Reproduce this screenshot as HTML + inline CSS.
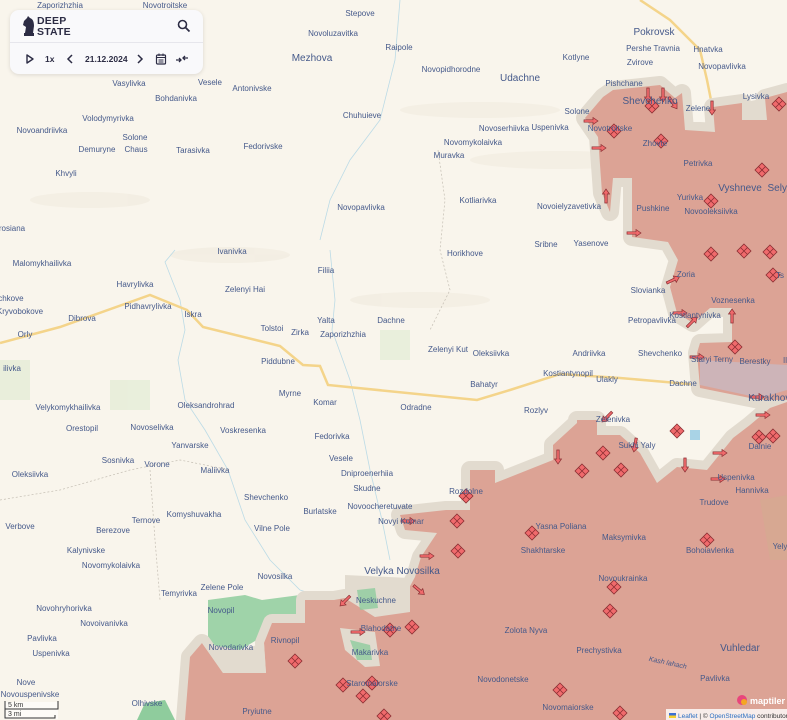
<!DOCTYPE html>
<html><head><meta charset="utf-8"><style>
html,body{margin:0;padding:0;width:787px;height:720px;overflow:hidden;background:#f9f5ec;font-family:"Liberation Sans",sans-serif}
svg{position:absolute;left:0;top:0}
.l text{font-size:8px;fill:#45598a;text-anchor:middle;font-family:"Liberation Sans",sans-serif}
.l text.b{font-size:10px}
.panel{position:absolute;left:10px;top:10px;width:193px;height:64px;background:#f9f9fb;border-radius:9px;box-shadow:0 1px 4px rgba(0,0,0,.12)}
.panel .logo{position:absolute;left:27px;top:6px;font-weight:bold;font-size:10.5px;line-height:11px;color:#2c2c44;letter-spacing:.2px}
.panel .div{position:absolute;left:0;right:0;top:32px;height:1px;background:#e6e6ec}
.panel .row{position:absolute;top:42px;left:0;width:193px;font-size:8.5px;font-weight:bold;color:#2c2c44}
.panel .row span{position:absolute}
</style></head><body>
<svg width="787" height="720" viewBox="0 0 787 720" xmlns="http://www.w3.org/2000/svg">
<defs>
<g id="m"><path d="M0-7L7 0 0 7-7 0Z" fill="#f06a6c" stroke="#8b2f33" stroke-width=".8"/><path d="M-3.5-3.5L3.5 3.5M3.5-3.5L-3.5 3.5" stroke="#8b2f33" stroke-width=".8"/></g>
<g id="a"><path d="M7-1.2H-2V-3.5L-7 0-2 3.5V1.2H7Z" fill="#f06a6c" stroke="#8b2f33" stroke-width=".7"/></g>
</defs>
<!-- terrain hints -->
<g fill="#efe9dc" opacity=".5">
<ellipse cx="230" cy="255" rx="60" ry="8"/><ellipse cx="560" cy="160" rx="90" ry="9"/><ellipse cx="420" cy="300" rx="70" ry="8"/><ellipse cx="90" cy="200" rx="60" ry="8"/><ellipse cx="480" cy="110" rx="80" ry="8"/>
</g>
<g fill="#e3ecd5" opacity=".7">
<rect x="110" y="380" width="40" height="30"/><rect x="0" y="360" width="30" height="40"/><rect x="380" y="330" width="30" height="30"/>
</g>
<!-- rivers -->
<g fill="none" stroke="#bcdbe6" stroke-width=".8">
<path d="M175 250L165 262 172 280 180 300 185 330 178 360 185 400 205 430 228 470 245 520 270 560 300 590 330 600"/>
<path d="M400 0L395 60 380 120 350 160 330 200 320 240"/>
<path d="M330 250L335 300 332 330 350 380 360 420 370 470 382 520 390 560"/>
</g>
<!-- borders -->
<g fill="none" stroke="#c4beb3" stroke-width=".7" stroke-dasharray="2 2">
<path d="M438 150L445 200 440 250 450 290 430 330"/><path d="M0 500L60 490 130 470 180 460 230 470"/><path d="M150 470L155 540 160 600"/>
</g>
<!-- roads -->
<path d="M0 343L60 327 150 295 187 310 203 327 280 346 303 365 320 366 328 385 477 400 510 390 560 374 620 378 700 385 760 396 787 400" fill="none" stroke="#f4d48a" stroke-width="2.5"/>
<path d="M640 0L670 20 700 50 707 80 713 110 723 137 747 153 787 148" fill="none" stroke="#f4d48a" stroke-width="2.5"/>
<!-- green areas -->
<path d="M208 600L245 595 262 600 300 595 305 620 265 635 240 650 208 650Z" fill="#8fcc9d" opacity=".85"/>
<path d="M137 720L145 703 165 700 175 720Z" fill="#8fcc9d"/>
<!-- buffer + red regions -->
<g stroke="#e2dbcf" stroke-width="18" stroke-linejoin="round" fill="#e2dbcf">
<path d="M585 118L603 97 613 90 660 85 675 98 682 93 685 130 715 132 713 107 742 103 742 120 767 120 765 98 787 92 787 400 760 400 700 388 697 353 700 343 732 342 732 308 710 308 693 323 677 313 670 287 678 260 668 242 632 237 632 178 613 178 610 212 602 193 598 137Z"/>
<path d="M185 720L190 657 202 643 223 673 266 673 264 643 272 623 305 623 305 600 334 600 345 598 375 617 408 590 415 577 421 557 437 533 405 530 400 515 446 510 470 510 470 470 495 470 495 483 553 460 553 445 577 423 577 420 597 420 597 435 620 435 640 453 657 483 677 467 707 470 733 438 750 425 770 408 787 402 787 720Z"/>
</g>
<g fill="#dca395">
<path d="M585 118L603 97 613 90 660 85 675 98 682 93 685 130 715 132 713 107 742 103 742 120 767 120 765 98 787 92 787 400 760 400 700 388 697 353 700 343 732 342 732 308 710 308 693 323 677 313 670 287 678 260 668 242 632 237 632 178 613 178 610 212 602 193 598 137Z"/>
<path d="M185 720L190 657 202 643 223 673 266 673 264 643 272 623 305 623 305 600 334 600 345 598 375 617 408 590 415 577 421 557 437 533 405 530 400 515 446 510 470 510 470 470 495 470 495 483 553 460 553 445 577 423 577 420 597 420 597 435 620 435 640 453 657 483 677 467 707 470 733 438 750 425 770 408 787 402 787 720Z"/>
</g>
<!-- gray pockets -->
<path d="M345 575L410 578 410 612 375 617 345 598Z" fill="#e2dbcf"/>
<path d="M340 628L375 632 380 666 365 667 345 650Z" fill="#e2dbcf"/>
<path d="M350 640L370 645 372 660 357 660Z" fill="#8fcc9d" opacity=".8"/>
<path d="M357 590L375 588 378 608 360 610Z" fill="#8fcc9d" opacity=".8"/>
<path d="M202 643L223 673 266 673 264 643 240 650Z" fill="#e2dbcf"/>
<path d="M700 360L787 365 787 390 760 398 700 385Z" fill="#c9b8c0" opacity=".8"/>
<path d="M745 112L765 112 765 98 742 103Z" fill="#e2dbcf"/>
<rect x="690" y="430" width="10" height="10" fill="#a9d3e6"/>
<path d="M760 500L787 495 787 560 770 560Z" fill="#cfae8f" opacity=".4"/>
<!-- markers -->
<g>
<use href="#m" x="652" y="106"/><use href="#m" x="614" y="131"/><use href="#m" x="661" y="141"/><use href="#m" x="762" y="170"/><use href="#m" x="711" y="201"/><use href="#m" x="779" y="104"/><use href="#m" x="711" y="254"/><use href="#m" x="744" y="251"/><use href="#m" x="770" y="252"/><use href="#m" x="773" y="275"/><use href="#m" x="735" y="347"/><use href="#m" x="759" y="437"/><use href="#m" x="773" y="436"/><use href="#m" x="603" y="453"/><use href="#m" x="582" y="471"/><use href="#m" x="621" y="470"/><use href="#m" x="466" y="496"/><use href="#m" x="457" y="521"/><use href="#m" x="458" y="551"/><use href="#m" x="532" y="533"/><use href="#m" x="707" y="540"/><use href="#m" x="614" y="587"/><use href="#m" x="610" y="611"/><use href="#m" x="295" y="661"/><use href="#m" x="390" y="630"/><use href="#m" x="412" y="627"/><use href="#m" x="343" y="685"/><use href="#m" x="363" y="696"/><use href="#m" x="372" y="683"/><use href="#m" x="560" y="690"/><use href="#m" x="620" y="713"/><use href="#m" x="384" y="716"/><use href="#m" x="677" y="431"/>
</g>
<!-- arrows -->
<g>
<use href="#a" transform="translate(648,95) rotate(-90)"/><use href="#a" transform="translate(663,95) rotate(-90)"/><use href="#a" transform="translate(673,103) rotate(-125)"/><use href="#a" transform="translate(712,108) rotate(-90)"/><use href="#a" transform="translate(591,121) rotate(180)"/><use href="#a" transform="translate(599,148) rotate(180)"/><use href="#a" transform="translate(606,196) rotate(90)"/><use href="#a" transform="translate(634,233) rotate(180)"/><use href="#a" transform="translate(673,280) rotate(155)"/><use href="#a" transform="translate(680,313) rotate(180)"/><use href="#a" transform="translate(692,322) rotate(135)"/><use href="#a" transform="translate(732,316) rotate(90)"/><use href="#a" transform="translate(697,357) rotate(180)"/><use href="#a" transform="translate(757,397) rotate(180)"/><use href="#a" transform="translate(763,415) rotate(180)"/><use href="#a" transform="translate(607,417) rotate(-45)"/><use href="#a" transform="translate(558,457) rotate(-90)"/><use href="#a" transform="translate(635,445) rotate(-80)"/><use href="#a" transform="translate(685,465) rotate(-90)"/><use href="#a" transform="translate(720,453) rotate(180)"/><use href="#a" transform="translate(718,479) rotate(180)"/><use href="#a" transform="translate(408,521) rotate(180)"/><use href="#a" transform="translate(427,556) rotate(180)"/><use href="#a" transform="translate(419,590) rotate(-140)"/><use href="#a" transform="translate(345,601) rotate(-45)"/><use href="#a" transform="translate(358,632) rotate(180)"/>
</g>
<!-- labels -->
<g class="l">
<text x="60" y="8">Zaporizhzhia</text><text x="165" y="8">Novotroitske</text><text x="360" y="16">Stepove</text><text x="333" y="36">Novoluzavitka</text><text x="399" y="50">Raipole</text><text class="b" x="654" y="35">Pokrovsk</text><text x="653" y="51">Pershe Travnia</text><text x="708" y="52">Hnatvka</text><text x="576" y="60">Kotlyne</text><text x="640" y="65">Zvirove</text><text x="722" y="69">Novopavlivka</text><text class="b" x="312" y="61">Mezhova</text><text x="451" y="72">Novopidhorodne</text><text class="b" x="520" y="81">Udachne</text><text x="129" y="86">Vasylivka</text><text x="210" y="85">Vesele</text><text x="252" y="91">Antonivske</text><text x="176" y="101">Bohdanivka</text><text x="624" y="86">Pishchane</text><text x="756" y="99">Lysivka</text><text class="b" x="650" y="104">Shevchenko</text><text x="698" y="111">Zelene</text><text x="108" y="121">Volodymyrivka</text><text x="362" y="118">Chuhuieve</text><text x="577" y="114">Solone</text><text x="504" y="131">Novoserhiivka</text><text x="550" y="130">Uspenivka</text><text x="610" y="131">Novotroitske</text><text x="42" y="133">Novoandriivka</text><text x="135" y="140">Solone</text><text x="97" y="152">Demuryne</text><text x="136" y="152">Chaus</text><text x="193" y="153">Tarasivka</text><text x="263" y="149">Fedorivske</text><text x="473" y="145">Novomykolaivka</text><text x="449" y="158">Muravka</text><text x="655" y="146">Zhovte</text><text x="698" y="166">Petrivka</text><text x="66" y="176">Khvyli</text><text class="b" x="740" y="191">Vyshneve</text><text class="b" x="780" y="191">Selyd</text><text x="690" y="200">Yurivka</text><text x="478" y="203">Kotliarivka</text><text x="361" y="210">Novopavlivka</text><text x="569" y="209">Novoielyzavetivka</text><text x="653" y="211">Pushkine</text><text x="711" y="214">Novooleksiivka</text><text x="12" y="231">rosiana</text><text x="546" y="247">Sribne</text><text x="591" y="246">Yasenove</text><text x="232" y="254">Ivanivka</text><text x="465" y="256">Horikhove</text><text x="42" y="266">Malomykhailivka</text><text x="326" y="273">Filiia</text><text x="686" y="277">Zoria</text><text x="780" y="278">Ts</text><text x="135" y="287">Havrylivka</text><text x="245" y="292">Zelenyi Hai</text><text x="648" y="293">Slovianka</text><text x="10" y="301">ichkove</text><text x="20" y="314">Kryvobokove</text><text x="148" y="309">Pidhavrylivka</text><text x="193" y="317">Iskra</text><text x="82" y="321">Dibrova</text><text x="272" y="331">Tolstoi</text><text x="300" y="335">Zirka</text><text x="326" y="323">Yalta</text><text x="391" y="323">Dachne</text><text x="652" y="323">Petropavlivka</text><text x="695" y="318">Kostiantynivka</text><text x="733" y="303">Voznesenka</text><text x="25" y="337">Orly</text><text x="343" y="337">Zaporizhzhia</text><text x="448" y="352">Zelenyi Kut</text><text x="491" y="356">Oleksiivka</text><text x="589" y="356">Andriivka</text><text x="660" y="356">Shevchenko</text><text x="712" y="362">Staryi Terny</text><text x="755" y="364">Berestky</text><text x="785" y="363">Il</text><text x="12" y="371">ilivka</text><text x="278" y="364">Piddubne</text><text x="484" y="387">Bahatyr</text><text x="568" y="376">Kostiantynopil</text><text x="607" y="382">Ulakly</text><text x="683" y="386">Dachne</text><text class="b" x="772" y="401">Kurakhove</text><text x="290" y="396">Myrne</text><text x="325" y="405">Komar</text><text x="416" y="410">Odradne</text><text x="536" y="413">Rozlyv</text><text x="68" y="410">Velykomykhailivka</text><text x="206" y="408">Oleksandrohrad</text><text x="613" y="422">Zelenivka</text><text x="82" y="431">Orestopil</text><text x="152" y="430">Novoselivka</text><text x="243" y="433">Voskresenka</text><text x="332" y="439">Fedorivka</text><text x="637" y="448">Sukhi Yaly</text><text x="760" y="449">Dalnie</text><text x="190" y="448">Yanvarske</text><text x="118" y="463">Sosnivka</text><text x="157" y="467">Vorone</text><text x="341" y="461">Vesele</text><text x="215" y="473">Maliivka</text><text x="367" y="476">Dniproenerhiia</text><text x="736" y="480">Uspenivka</text><text x="30" y="477">Oleksiivka</text><text x="367" y="491">Skudne</text><text x="752" y="493">Hannivka</text><text x="266" y="500">Shevchenko</text><text x="320" y="514">Burlatske</text><text x="380" y="509">Novoocheretuvate</text><text x="714" y="505">Trudove</text><text x="466" y="494">Rozdolne</text><text x="146" y="523">Ternove</text><text x="194" y="517">Komyshuvakha</text><text x="20" y="529">Verbove</text><text x="113" y="533">Berezove</text><text x="401" y="524">Novyi Komar</text><text x="272" y="531">Vilne Pole</text><text x="624" y="540">Maksymivka</text><text x="561" y="529">Yasna Poliana</text><text x="782" y="549">Yelyz</text><text x="86" y="553">Kalynivske</text><text x="543" y="553">Shakhtarske</text><text x="710" y="553">Bohoiavlenka</text><text x="111" y="568">Novomykolaivka</text><text class="b" x="402" y="574">Velyka Novosilka</text><text x="275" y="579">Novosilka</text><text x="623" y="581">Novoukrainka</text><text x="222" y="590">Zelene Pole</text><text x="179" y="596">Temyrivka</text><text x="376" y="603">Neskuchne</text><text x="221" y="613">Novopil</text><text x="64" y="611">Novohryhorivka</text><text x="104" y="626">Novoivanivka</text><text x="526" y="633">Zolota Nyva</text><text x="285" y="643">Rivnopil</text><text x="42" y="641">Pavlivka</text><text x="381" y="631">Blahodatne</text><text x="599" y="653">Prechystivka</text><text class="b" x="740" y="651">Vuhledar</text><text x="231" y="650">Novodarivka</text><text x="370" y="655">Makarivka</text><text x="51" y="656">Uspenivka</text><text x="668" y="665" transform="rotate(12 668 662)" style="font-style:italic;font-size:7px">Kash lahach</text><text x="503" y="682">Novodonetske</text><text x="715" y="681">Pavlivka</text><text x="147" y="706">Olhivske</text><text x="26" y="685">Nove</text><text x="30" y="697">Novouspenivske</text><text x="257" y="714">Pryiutne</text><text x="372" y="686">Staromaiorske</text><text x="568" y="710">Novomaiorske</text>
</g>
<!-- scale -->
<g font-size="7" fill="#333" font-family="Liberation Sans">
<rect x="4" y="702" width="54" height="17" fill="#fff" opacity=".6"/>
<path d="M5 701V709H58V701M5 709V718H55V715" fill="none" stroke="#333" stroke-width="1"/>
<text x="8" y="707">5 km</text><text x="8" y="716">3 mi</text>
</g>
<!-- attribution -->
<rect x="666" y="709" width="121" height="11" fill="#fff" opacity=".8"/>
<rect x="669" y="713" width="7" height="2.5" fill="#3b6fd4"/><rect x="669" y="715.5" width="7" height="2.5" fill="#f5cf2c"/>
<text x="678" y="718" font-size="6.5" font-family="Liberation Sans" fill="#333"><tspan fill="#2a6fc2">Leaflet</tspan> | © <tspan fill="#2a6fc2">OpenStreetMap</tspan> contributors</text>
<circle cx="742" cy="700" r="5" fill="#e8467c"/><circle cx="744" cy="702" r="3" fill="#f5a623"/>
<text x="750" y="704" font-size="9" font-weight="bold" fill="#fff" font-family="Liberation Sans">maptiler</text>
</svg>
<div class="panel">
<svg width="14" height="20" style="left:12px;top:6px" viewBox="0 0 14 20"><path d="M2 20V17H3L4 11 1 9 2 5 5 2 6 0 8 2C11 3 12 6 12 10L11 17H12V20Z" fill="#2c2c44"/></svg>
<div class="logo">DEEP<br>STATE</div>
<svg width="14" height="14" style="left:167px;top:9px" viewBox="0 0 14 14"><circle cx="5.5" cy="5.5" r="4" fill="none" stroke="#2c2c44" stroke-width="1.6"/><path d="M8.5 8.5L12.5 12.5" stroke="#2c2c44" stroke-width="1.8"/></svg>
<div class="div"></div>
<div class="row">
<svg width="10" height="10" style="left:15px;top:2px" viewBox="0 0 10 10"><path d="M2 1L8 5 2 9Z" fill="none" stroke="#2c2c44" stroke-width="1.4" stroke-linejoin="round"/></svg>
<span style="left:35px;top:2px">1x</span>
<svg width="8" height="10" style="left:56px;top:2px" viewBox="0 0 8 10"><path d="M6 1L2 5 6 9" fill="none" stroke="#2c2c44" stroke-width="1.5"/></svg>
<span style="left:75px;top:2px">21.12.2024</span>
<svg width="8" height="10" style="left:126px;top:2px" viewBox="0 0 8 10"><path d="M2 1L6 5 2 9" fill="none" stroke="#2c2c44" stroke-width="1.5"/></svg>
<svg width="12" height="12" style="left:145px;top:1px" viewBox="0 0 12 12"><rect x="1.5" y="2" width="9" height="9" rx="1" fill="none" stroke="#2c2c44" stroke-width="1.2"/><path d="M1.5 4.5H10.5M4 0.5V3M8 0.5V3M3.5 7H8.5M3.5 9H8.5" stroke="#2c2c44" stroke-width="1"/></svg>
<svg width="14" height="12" style="left:165px;top:1px" viewBox="0 0 14 12"><path d="M1 7H6M4 5L6 7 4 9M13 5H8M10 3L8 5 10 7" fill="none" stroke="#2c2c44" stroke-width="1.3"/></svg>
</div>
</div>
</body></html>
